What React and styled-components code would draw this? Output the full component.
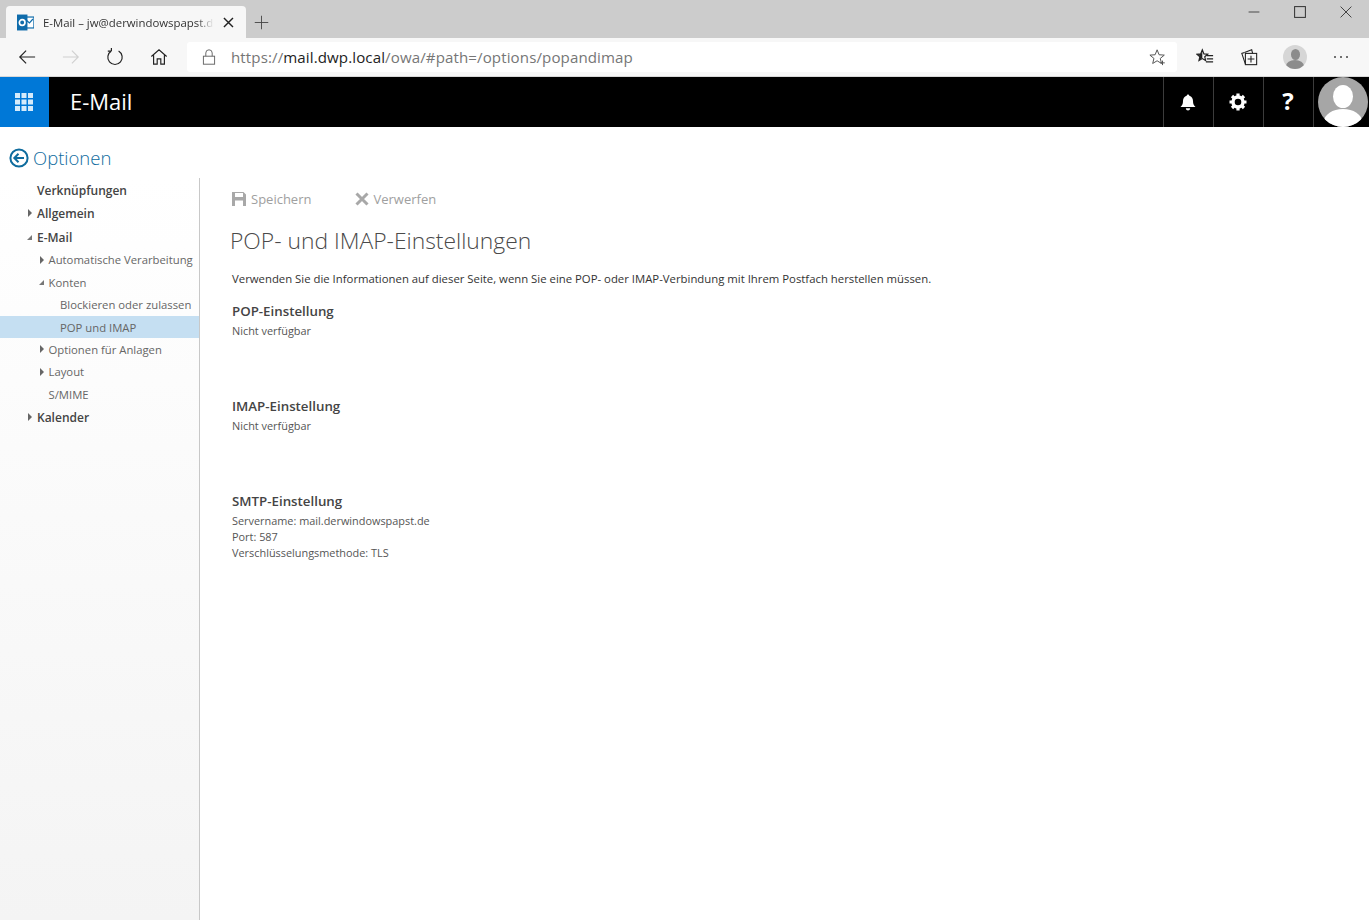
import React from 'react';
import styled, { createGlobalStyle } from 'styled-components';

const GlobalStyle = createGlobalStyle`
  html, body { margin: 0; padding: 0; height: 100%; background: #fff; }
  body { font-family: "Open Sans", "Noto Sans", "Liberation Sans", sans-serif; overflow: hidden; }
  * { box-sizing: border-box; }
`;

const Icon = ({ size = 20, children, color = '#333', width = 1.3 }) => (
  <svg width={size} height={size} viewBox="0 0 20 20" fill="none" stroke={color} strokeWidth={width}>
    {children}
  </svg>
);

const navItems = [
  { label: 'Verknüpfungen', level: 0 },
  { label: 'Allgemein', level: 0, arrow: 'closed', gap: 0.5 },
  { label: 'E-Mail', level: 0, arrow: 'open', gap: 2 },
  { label: 'Automatische Verarbeitung', level: 1, arrow: 'closed' },
  { label: 'Konten', level: 1, arrow: 'open' },
  { label: 'Blockieren oder zulassen', level: 2 },
  { label: 'POP und IMAP', level: 2, active: true },
  { label: 'Optionen für Anlagen', level: 1, arrow: 'closed' },
  { label: 'Layout', level: 1, arrow: 'closed' },
  { label: 'S/MIME', level: 1 },
  { label: 'Kalender', level: 0, arrow: 'closed', gap: 0.5 },
];

const sections = [
  { title: 'POP-Einstellung', lines: ['Nicht verfügbar'] },
  { title: 'IMAP-Einstellung', lines: ['Nicht verfügbar'] },
  {
    title: 'SMTP-Einstellung',
    lines: ['Servername: mail.derwindowspapst.de', 'Port: 587', 'Verschlüsselungsmethode: TLS'],
  },
];

const App = () => (
  <Page>
    <GlobalStyle />
    <TabStrip>
      <Tab>
        <svg width="17" height="17" viewBox="0 0 17 17">
          <rect x="7" y="3" width="10" height="11" fill="#fff" stroke="#0f6cab" strokeWidth="1.2" />
          <path d="M8 5l4.500 4L16 5" fill="none" stroke="#0f6cab" strokeWidth="1.2" />
          <rect x="0" y="0.500" width="10.500" height="16" fill="#0f6cab" />
          <circle cx="5.200" cy="8.500" r="2.800" fill="none" stroke="#fff" strokeWidth="1.700" />
        </svg>
        <TabTitle>E-Mail – jw@derwindowspapst.de</TabTitle>
        <Icon size={13} color="#222" width={2.2}><path d="M3 3l14 14M17 3L3 17" /></Icon>
      </Tab>
      <NewTab>
        <Icon size={15} color="#444" width={1.2}><path d="M10 1v18M1 10h18" /></Icon>
      </NewTab>
      <WindowButtons>
        <Icon size={12} color="#333" width={1.4}><path d="M1 10h18" /></Icon>
        <Icon size={12} color="#333" width={1.7}><rect x="1" y="1" width="18" height="18" /></Icon>
        <Icon size={12} color="#333" width={1.5}><path d="M1 1l18 18M19 1L1 19" /></Icon>
      </WindowButtons>
    </TabStrip>

    <Toolbar>
      <NavButtons>
        <NavSlot><Icon size={18} color="#222"><path d="M19 10H2M9 3l-7 7 7 7" /></Icon></NavSlot>
        <NavSlot><Icon size={18} color="#d0d0d0"><path d="M1 10h17M11 3l7 7-7 7" /></Icon></NavSlot>
        <NavSlot><Icon size={18} color="#222"><path d="M6 3.400A8 8 0 1 0 14 3.400M6 3.400V0M6 3.400H2" /></Icon></NavSlot>
        <NavSlot><Icon size={18} color="#222"><path d="M1.500 9.500L10 2l8.500 7.500M4 8v10h4v-6h4v6h4V8" /></Icon></NavSlot>
      </NavButtons>
      <AddressBar>
        <Icon size={16} color="#666" width={1.2}>
          <rect x="3" y="9" width="14" height="10" />
          <path d="M6 9V5a4 4 0 0 1 8 0v4" />
        </Icon>
        <Url>
          https://<strong>mail.dwp.local</strong>/owa/#path=/options/popandimap
        </Url>
        <Icon size={18} color="#555" width={1.1}>
          <path d="M9 2l2.200 5.500 5.800.4-4.500 3.700 1.400 5.600L9 14.200 4.100 17.200l1.400-5.600L1 7.900l5.800-.4z" />
          <path d="M15 14v5M12.500 16.500h5" />
        </Icon>
      </AddressBar>
      <ToolIcons>
        <Icon size={18} color="#222" width={1.3}>
          <path d="M7 2l1.800 4.500 4.200.4-3.300 2.800 1 4.300L7 11.800 3.300 14l1-4.300L1 6.900l4.200-.4z" />
          <path d="M7 3v8.500L3.800 13l.8-3.500L2 7l3.500-.4z" fill="#222" stroke="none" />
          <path d="M12 8.500h7M12 12h7M11 15.500h8" />
        </Icon>
        <Icon size={18} color="#222" width={1.2}>
          <path d="M5 5l8-3 1 4" />
          <path d="M5 5l-3 1 4 12" />
          <rect x="6" y="6" width="12.500" height="12.500" />
          <path d="M12.200 8.500v7.500M8.500 12.200h7.500" />
        </Icon>
        <Avatar $size={24} $bg="#d6d6d6" $fg="#8c8c8c" />
        <svg width="16" height="4" viewBox="0 0 16 4" fill="#444">
          <circle cx="2" cy="2" r="1" />
          <circle cx="8" cy="2" r="1" />
          <circle cx="14" cy="2" r="1" />
        </svg>
      </ToolIcons>
    </Toolbar>

    <SuiteBar>
      <Launcher>
        <svg width="18" height="18" viewBox="0 0 18 18" fill="#d5ebfb">
          {[0, 6.5, 13].flatMap((y) =>
            [0, 6.5, 13].map((x) => <rect key={`${x}-${y}`} x={x} y={y} width="5" height="5" />)
          )}
        </svg>
      </Launcher>
      <AppName>E-Mail</AppName>
      <SuiteActions>
        <SuiteButton>
          <svg width="16" height="17" viewBox="0 0 16 17" fill="#fff">
            <path d="M8 0.500c-.8 0-1.300.6-1.300 1.300C4.200 2.500 3 4.500 3 7c0 3-.8 4.500-2.500 6h15C13.800 11.500 13 10 13 7c0-2.500-1.200-4.500-3.700-5.200C9.300 1.100 8.800 .5 8 .5z" />
            <path d="M5.800 14.300h4.400C10 15.700 9.100 16.500 8 16.500s-2-.8-2.200-2.200z" />
          </svg>
        </SuiteButton>
        <SuiteButton>
          <svg width="18" height="18" viewBox="0 0 18 18">
            <circle cx="9" cy="9" r="5" fill="none" stroke="#fff" strokeWidth="3.400" />
            <g stroke="#fff" strokeWidth="3.200">
              <path d="M9 0.500v3M9 14.500v3M0.500 9h3M14.500 9h3M3 3l2.100 2.100M12.900 12.900L15 15M15 3l-2.100 2.100M5.100 12.900L3 15" />
            </g>
          </svg>
        </SuiteButton>
        <SuiteButton><Question>?</Question></SuiteButton>
        <AvatarSlot><Avatar $size={50} $bg="#a6a6a6" $fg="#fff" /></AvatarSlot>
      </SuiteActions>
    </SuiteBar>

    <BackRow>
      <svg width="20" height="20" viewBox="0 0 20 20" fill="none" stroke="#0f6c9e" strokeWidth="2">
        <circle cx="10" cy="10" r="8.600" />
        <path d="M15 10H5.500M9.500 5.800L5.300 10l4.200 4.200" />
      </svg>
      <BackTitle>Optionen</BackTitle>
    </BackRow>

    <Body>
      <Sidebar>
        {navItems.map((item) => (
          <NavItem key={item.label} $level={item.level} $active={item.active} $gap={item.gap}>
            {item.arrow && <Arrow $open={item.arrow === 'open'} />}
            {item.label}
          </NavItem>
        ))}
      </Sidebar>
      <Main>
        <Actions>
          <Action>
            <svg width="14" height="14" viewBox="0 0 14 14" fill="#a8a8a8">
              <path d="M0 0h11.500L14 2.500V14H0zM3 1v4h8V1zM3 8.500V14h8V8.500z" fillRule="evenodd" />
            </svg>
            Speichern
          </Action>
          <Action>
            <svg width="14" height="14" viewBox="0 0 14 14" fill="none" stroke="#a8a8a8" strokeWidth="3">
              <path d="M1.500 1.500l11 11M12.500 1.500l-11 11" />
            </svg>
            Verwerfen
          </Action>
        </Actions>
        <Heading>POP- und IMAP-Einstellungen</Heading>
        <Intro>
          Verwenden Sie die Informationen auf dieser Seite, wenn Sie eine POP- oder IMAP-Verbindung mit Ihrem Postfach herstellen müssen.
        </Intro>
        {sections.map((s) => (
          <Section key={s.title}>
            <SectionTitle>{s.title}</SectionTitle>
            {s.lines.map((line) => (
              <Line key={line}>{line}</Line>
            ))}
          </Section>
        ))}
      </Main>
    </Body>
  </Page>
);

export default App;

const Page = styled.div`
  width: 1369px;
  height: 920px;
  display: flex;
  flex-direction: column;
  background: #fff;
  overflow: hidden;
`;

const TabStrip = styled.div`
  height: 38px;
  background: #cccccc;
  display: flex;
  align-items: flex-end;
  padding-left: 6px;
`;

const Tab = styled.div`
  width: 240px;
  height: 32px;
  background: #f7f7f7;
  border-radius: 4px 4px 0 0;
  display: flex;
  align-items: center;
  padding: 0 11px 0 11px;
`;

const TabTitle = styled.span`
  width: 172px;
  margin: 0 8px 0 9px;
  font-size: 11.400px;
  color: #333;
  white-space: nowrap;
  overflow: hidden;
  mask-image: linear-gradient(to right, #000 90%, transparent 100%);
`;

const NewTab = styled.div`
  width: 31px;
  height: 32px;
  display: flex;
  align-items: center;
  justify-content: center;
`;

const WindowButtons = styled.div`
  margin-left: auto;
  height: 38px;
  padding: 6px 17px 20px 0;
  display: flex;
  gap: 34px;
  align-items: center;
`;

const Toolbar = styled.div`
  height: 39px;
  background: #f7f7f7;
  border-bottom: 1px solid #d8d8d8;
  display: flex;
  align-items: center;
`;

const NavButtons = styled.div`
  display: flex;
  padding-left: 5px;
  width: 187px;
`;

const NavSlot = styled.div`
  width: 44px;
  display: flex;
  justify-content: center;
`;

const AddressBar = styled.div`
  width: 990px;
  height: 30px;
  background: #fff;
  border-radius: 3px;
  display: flex;
  align-items: center;
  padding: 0 10px 0 14px;
`;

const Url = styled.div`
  flex: 1;
  margin-left: 14px;
  font-size: 15.100px;
  color: #767676;
  letter-spacing: 0.1px;

  strong {
    font-weight: 400;
    color: #222;
  }
`;

const ToolIcons = styled.div`
  flex: 1;
  display: flex;
  align-items: center;
  justify-content: space-between;
  padding: 0 20px 0 19px;
`;

const Avatar = styled.div`
  width: ${(p) => p.$size}px;
  height: ${(p) => p.$size}px;
  border-radius: 50%;
  position: relative;
  overflow: hidden;
  background: ${(p) => p.$bg};

  &::before {
    content: '';
    position: absolute;
    left: 30%;
    top: 16%;
    width: 40%;
    height: 46%;
    border-radius: 50%;
    background: ${(p) => p.$fg};
  }

  &::after {
    content: '';
    position: absolute;
    left: 12%;
    top: 64%;
    width: 76%;
    height: 50%;
    border-radius: 50%;
    background: ${(p) => p.$fg};
  }
`;

const SuiteBar = styled.div`
  height: 50px;
  background: #000;
  display: flex;
  align-items: center;
`;

const Launcher = styled.div`
  width: 49px;
  height: 50px;
  padding-right: 1px;
  background: #0078d7;
  display: flex;
  align-items: center;
  justify-content: center;
`;

const AppName = styled.div`
  margin: -2px 0 0 21px;
  font-size: 22px;
  color: #fff;
`;

const SuiteActions = styled.div`
  margin-left: auto;
  display: flex;
  height: 50px;
`;

const SuiteButton = styled.div`
  width: 50px;
  border-left: 1px solid #3c3c3c;
  padding-right: 1px;
  display: flex;
  align-items: center;
  justify-content: center;
`;

const Question = styled.span`
  margin-top: -3px;
  color: #fff;
  font-size: 24px;
  font-weight: 700;
`;

const AvatarSlot = styled.div`
  width: 56px;
  border-left: 1px solid #3c3c3c;
  padding-left: 4px;
`;

const BackRow = styled.div`
  height: 51px;
  padding: 12px 0 1px 9px;
  display: flex;
  align-items: center;
  gap: 4px;
`;

const BackTitle = styled.div`
  margin-top: -1px;
  font-size: 18.500px;
  font-weight: 300;
  color: #0f6c9e;
`;

const Body = styled.div`
  flex: 1;
  display: flex;
`;

const Sidebar = styled.nav`
  width: 200px;
  background: linear-gradient(to bottom, #fff 0%, #f4f4f4 100%);
  border-right: 1px solid #c8c8c8;
  padding-top: 1px;
`;

const NavItem = styled.div`
  height: 22.400px;
  margin-top: ${(p) => p.$gap || 0}px;
  position: relative;
  display: flex;
  align-items: center;
  padding-left: ${(p) => 37 + 11.5 * p.$level}px;
  font-size: ${(p) => (p.$level === 0 ? 12 : 11.3)}px;
  font-weight: ${(p) => (p.$level === 0 ? 600 : 400)};
  color: ${(p) => (p.$level === 0 ? '#444' : '#666')};
  background: ${(p) => (p.$active ? '#c5dff2' : 'transparent')};
  white-space: nowrap;
`;

const Arrow = styled.span`
  position: absolute;
  margin-left: -9px;
  width: 0;
  height: 0;
  ${(p) =>
    p.$open
      ? `border-bottom: 5px solid #777; border-left: 5px solid transparent; margin-left: -10px;`
      : `border-left: 4px solid #666; border-top: 4px solid transparent; border-bottom: 4px solid transparent;`}
`;

const Main = styled.main`
  flex: 1;
  padding: 10px 0 0 32px;
`;

const Actions = styled.div`
  display: flex;
  gap: 43px;
  height: 22px;
  align-items: center;
`;

const Action = styled.div`
  display: flex;
  align-items: center;
  gap: 5px;
  font-size: 13px;
  color: #a0a0a0;

  & + & {
    margin-left: 1px;
    gap: 4px;
  }
`;

const Heading = styled.h1`
  margin: 15px 0 0 -2px;
  font-size: 22.850px;
  line-height: 32px;
  font-weight: 300;
  color: #4a4a4a;
`;

const Intro = styled.div`
  margin-top: 14px;
  font-size: 11.350px;
  line-height: 16px;
  color: #333;
`;

const Section = styled.section`
  height: 95px;
  padding-top: 15px;
`;

const SectionTitle = styled.div`
  font-size: 13.300px;
  line-height: 18px;
  font-weight: 600;
  color: #444;
  margin-bottom: 3px;
`;

const Line = styled.div`
  font-size: 10.900px;
  line-height: 16px;
  color: #555;
`;
